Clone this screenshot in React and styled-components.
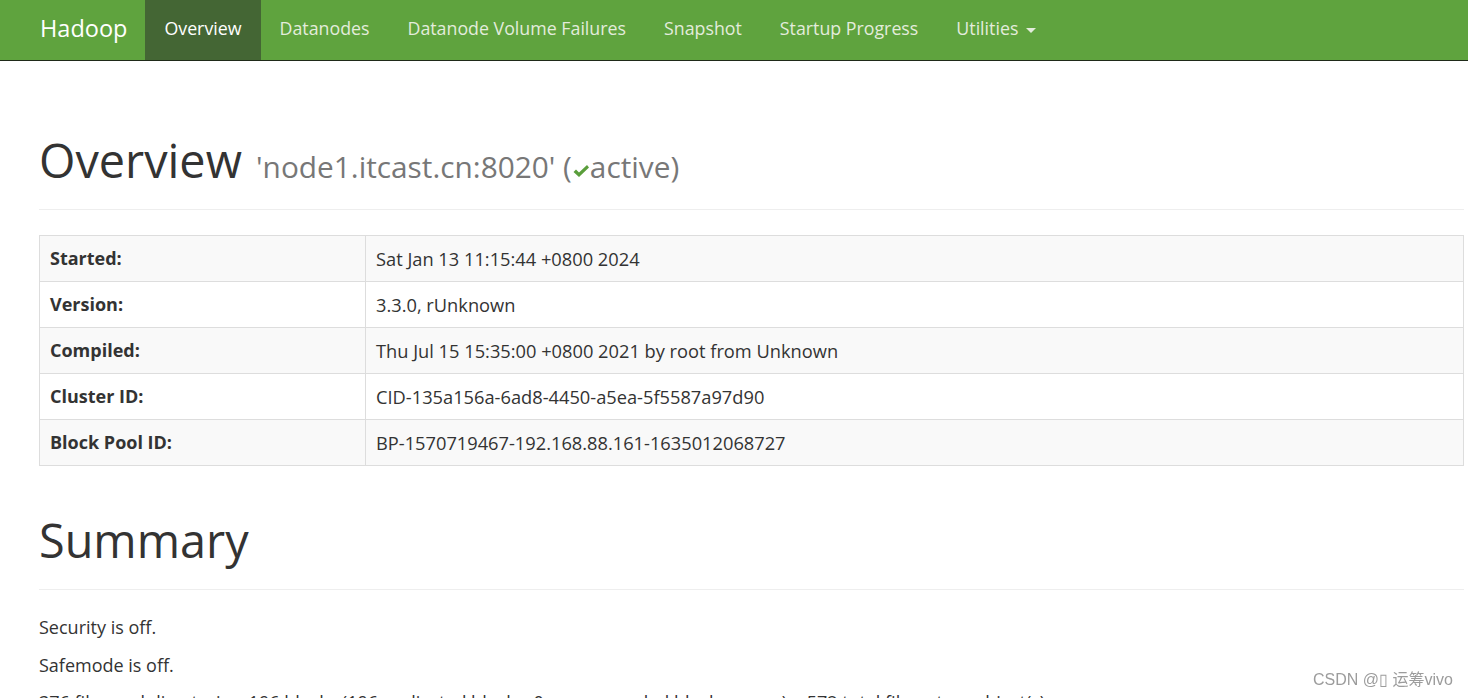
import React from 'react';
import styled, { createGlobalStyle } from 'styled-components';

const GlobalStyle = createGlobalStyle`
  html, body {
    margin: 0;
    padding: 0;
    background: #fff;
  }
  body {
    font-family: "Open Sans", "Noto Sans", "Noto Sans CJK SC", sans-serif;
    font-size: 18px;
    line-height: 25px;
    color: #333;
  }
`;

const Navbar = styled.nav`
  display: flex;
  align-items: stretch;
  height: 60px;
  padding-left: 21px;
  background: #5fa33e;
  border-bottom: 1px solid #1f2a19;
`;

const Brand = styled.a`
  display: flex;
  align-items: center;
  padding: 0 18px 3px 19px;
  font-size: 23.5px;
  color: #fff;
  text-decoration: none;
`;

const NavItem = styled.a`
  display: flex;
  align-items: center;
  gap: 8px;
  padding: 0 19px 3px;
  font-size: 17.8px;
  color: ${props => (props.active ? '#fff' : '#e3ecdc')};
  background: ${props => (props.active ? '#446634' : 'transparent')};
  text-decoration: none;
`;

const Caret = styled.span`
  display: inline-block;
  width: 0;
  height: 0;
  margin-top: 3px;
  border-top: 5px solid #e3ecdc;
  border-left: 5px solid transparent;
  border-right: 5px solid transparent;
`;

const Main = styled.main`
  padding: 25px 4px 0 39px;
`;

const PageHeader = styled.div`
  margin: 50px 0 25px;
  padding-bottom: 11px;
  border-bottom: 1px solid #eee;
`;

const Title = styled.h1`
  margin: 0 0 12.5px;
  font-size: 46.8px;
  line-height: 49.5px;
  font-weight: 400;
  color: #333;
`;

const Small = styled.small`
  margin-left: 2px;
  font-size: 29.8px;
  line-height: 1;
  color: #777;
`;

const Check = styled.svg`
  width: 18px;
  height: 16px;
  vertical-align: -1px;
`;

const Table = styled.table`
  width: 100%;
  border-collapse: collapse;
  border: 1px solid #ddd;
  font-size: 18.25px;
`;

const Row = styled.tr`
  background: ${props => (props.striped ? '#f9f9f9' : '#fff')};
`;

const Label = styled.th`
  width: 305px;
  padding: 10px;
  text-align: left;
  font-weight: 700;
  font-size: 18px;
  border: 1px solid #ddd;
`;

const Value = styled.td`
  padding: 10px;
  border: 1px solid #ddd;
`;

const Text = styled.p`
  margin: 0 0 12.5px;
`;

const Watermark = styled.div`
  position: fixed;
  right: 15px;
  bottom: 6px;
  font-family: "Liberation Sans", "Noto Sans CJK SC", sans-serif;
  font-size: 16px;
  color: #9c9c9c;
  pointer-events: none;
`;

const navItems = [
  'Overview',
  'Datanodes',
  'Datanode Volume Failures',
  'Snapshot',
  'Startup Progress',
];

const info = [
  ['Started:', 'Sat Jan 13 11:15:44 +0800 2024'],
  ['Version:', '3.3.0, rUnknown'],
  ['Compiled:', 'Thu Jul 15 15:35:00 +0800 2021 by root from Unknown'],
  ['Cluster ID:', 'CID-135a156a-6ad8-4450-a5ea-5f5587a97d90'],
  ['Block Pool ID:', 'BP-1570719467-192.168.88.161-1635012068727'],
];

const App = () => (
  <>
    <GlobalStyle />
    <Navbar>
      <Brand href="#">Hadoop</Brand>
      {navItems.map((item, i) => (
        <NavItem key={item} href="#" active={i === 0 ? 1 : 0}>{item}</NavItem>
      ))}
      <NavItem href="#">Utilities <Caret /></NavItem>
    </Navbar>
    <Main>
      <PageHeader>
        <Title>
          Overview{' '}
          <Small>
            {"'node1.itcast.cn:8020' ("}
            <Check viewBox="0 0 18 16">
              <path d="M1.5 9 L4 6.5 L7 9.5 L15 2 L17 4.5 L7 14 Z" fill="#5a9e3b" />
            </Check>
            active)
          </Small>
        </Title>
      </PageHeader>
      <Table>
        <tbody>
          {info.map(([label, value], i) => (
            <Row key={label} striped={i % 2 === 0 ? 1 : 0}>
              <Label>{label}</Label>
              <Value>{value}</Value>
            </Row>
          ))}
        </tbody>
      </Table>
      <PageHeader>
        <Title>Summary</Title>
      </PageHeader>
      <Text>Security is off.</Text>
      <Text>Safemode is off.</Text>
      <Text>376 files and directories, 196 blocks (196 replicated blocks, 0 erasure coded block groups) = 572 total filesystem object(s).</Text>
      <Text>Heap Memory used 103.52 MB of 259.5 MB Heap Memory. Max Heap Memory is 3.42 GB.</Text>
    </Main>
    <Watermark>CSDN @▯ 运筹vivo</Watermark>
  </>
);

export default App;
